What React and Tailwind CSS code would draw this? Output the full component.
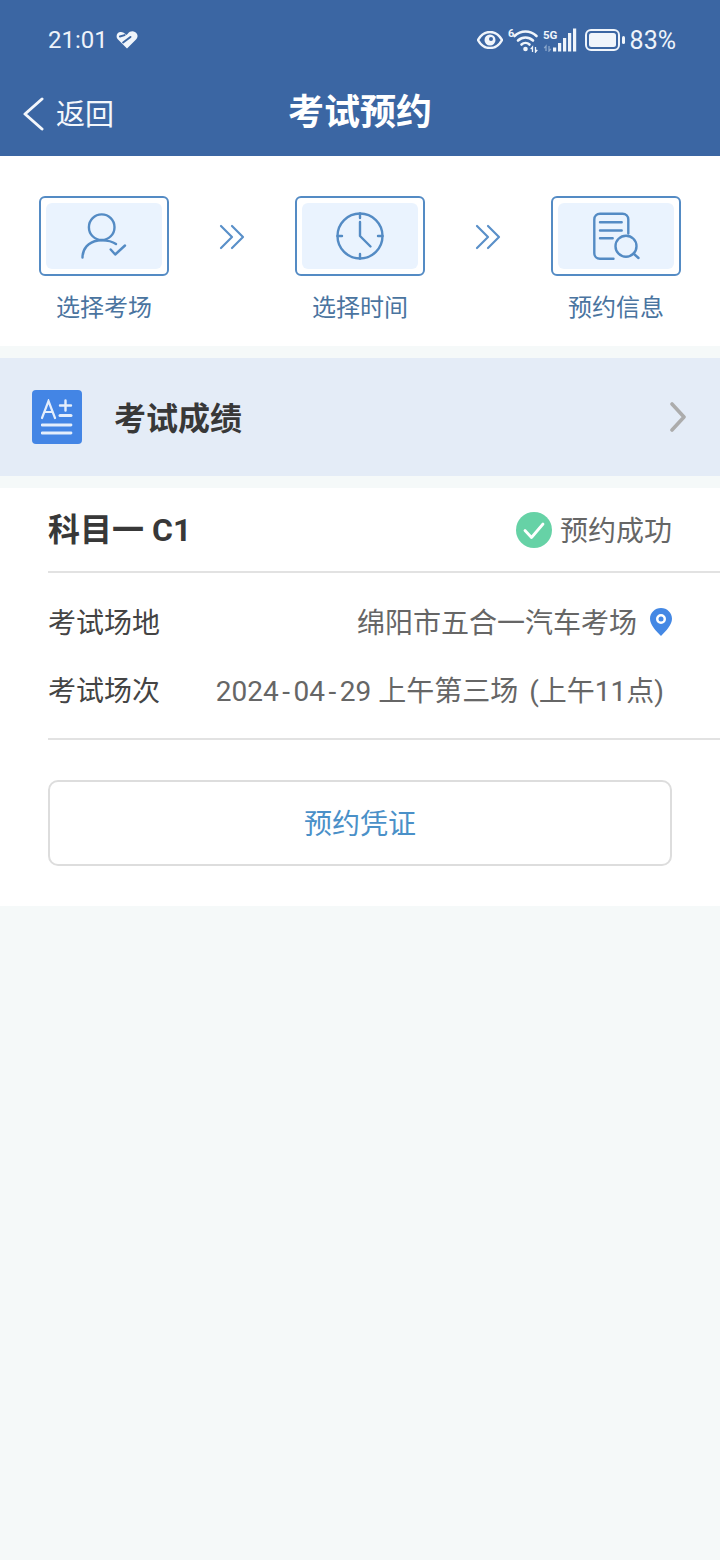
const sans = "font-['Roboto','Noto_Sans_CJK_SC',sans-serif]";

function StatusIcons() {
  return (
    <div className="flex items-center">
      {/* eye */}
      <svg width="26" height="18" viewBox="0 0 26 18" className="mr-[5px]">
        <path d="M1 9C4 3.500 8 1 13 1s9 2.500 12 8c-3 5.500-7 8-12 8S4 14.500 1 9z" fill="none" stroke="#f0f5fb" strokeWidth="2.400" />
        <circle cx="13" cy="9" r="5.500" fill="#f0f5fb" />
        <circle cx="14" cy="8" r="2" fill="#3b66a3" />
      </svg>
      {/* wifi */}
      <svg width="32" height="26" viewBox="0 0 32 26" className="mr-[3px]">
        <text x="0" y="10" fontSize="11" fontWeight="700" fill="#f0f5fb" fontFamily="Roboto, sans-serif">6</text>
        <path d="M6.500 9C13 3 22 3 28.500 9" fill="none" stroke="#f0f5fb" strokeWidth="2.600" strokeLinecap="round" />
        <path d="M10 13.500C14.500 9.500 20.500 9.500 25 13.500" fill="none" stroke="#f0f5fb" strokeWidth="2.600" strokeLinecap="round" />
        <path d="M13.500 17.500C15.800 15.500 19.200 15.500 21.500 17.500" fill="none" stroke="#f0f5fb" strokeWidth="2.600" strokeLinecap="round" />
        <circle cx="17.500" cy="22" r="2.300" fill="#f0f5fb" />
        <path d="M24.500 25v-5l-1.800 2.200M27.500 20v5l1.800-2.200" fill="none" stroke="#f0f5fb" strokeWidth="1.300" />
      </svg>
      {/* 5G signal */}
      <svg width="34" height="24" viewBox="0 0 34 24" className="mr-[8px]">
        <text x="0" y="11" fontSize="11.500" fontWeight="700" fill="#f0f5fb" fontFamily="Roboto, sans-serif">5G</text>
        <path d="M3 23v-5l-1.800 2.200M6 18v5l1.800-2.200" fill="none" stroke="#8aa6cb" strokeWidth="1.300" />
        <rect x="10" y="19.500" width="3.200" height="4" fill="#f0f5fb" />
        <rect x="15" y="15" width="3.200" height="8.500" fill="#f0f5fb" />
        <rect x="20" y="10" width="3.200" height="13.500" fill="#f0f5fb" />
        <rect x="25" y="5" width="3.200" height="18.500" fill="#f0f5fb" />
        <rect x="30" y="0.500" width="3.200" height="23" fill="#f0f5fb" />
      </svg>
      {/* battery */}
      <svg width="40" height="22" viewBox="0 0 40 22" className="mr-[5px]">
        <rect x="1" y="1" width="33" height="20" rx="5" fill="none" stroke="#f0f5fb" strokeWidth="2" />
        <rect x="4" y="4" width="27" height="14" rx="2.500" fill="#f0f5fb" />
        <rect x="37" y="7" width="3" height="8" rx="1.500" fill="#f0f5fb" />
      </svg>
      <span className="text-[25px] leading-none text-[#eef3fa]">83%</span>
    </div>
  );
}

function Step({ label, children }) {
  return (
    <div className="w-[130px] flex flex-col items-center">
      <div className="w-[130px] h-[80px] rounded-[6px] border-2 border-[#548bc4] p-[5px] bg-white">
        <div className="w-full h-full rounded-[6px] bg-[#eaf3fe] flex items-center justify-center">{children}</div>
      </div>
      <div className="mt-[17px] text-[24px] leading-[30px] text-[#4a749f]">{label}</div>
    </div>
  );
}

function DoubleArrow() {
  return (
    <svg width="26" height="26" viewBox="0 0 26 26" className="mt-[28px]">
      <path d="M2 2l11 11L2 24M13 2l11 11-11 11" fill="none" stroke="#5a90c9" strokeWidth="2.200" strokeLinecap="round" strokeLinejoin="round" />
    </svg>
  );
}

function InfoRow({ label, children }) {
  return (
    <div className="h-[68px] flex items-center justify-between">
      <span className="pt-[4px] text-[28px] text-[#444444]">{label}</span>
      {children}
    </div>
  );
}

export default function App() {
  return (
    <div className={`w-[720px] min-h-[1560px] bg-[#f5f9f9] ${sans}`}>
      <header className="h-[156px] bg-[#3b66a3] text-white">
        <div className="h-[80px] pl-[48px] pr-[44px] flex items-center justify-between">
          <div className="flex items-center gap-[8px]">
            <span className="text-[24px] leading-none text-[#eef3fa]">21:01</span>
            <svg width="22" height="18" viewBox="0 0 22 18">
              <path d="M11 17.500L2 8.500C-0.500 6 .500 1.500 4 1c2.500-.300 3.500.500 5 1.800L10.500 4l1.500-1.500C14-.500 19-.500 21 3c1 2 .500 4-1 5.500z" fill="#f0f5fb" />
              <path d="M3.500 6.500L8 4.500M7.500 12L14 5.500" fill="none" stroke="#3b66a3" strokeWidth="2" strokeLinecap="round" transform="rotate(8 11 9)" />
            </svg>
          </div>
          <StatusIcons />
        </div>
        <div className="relative h-[76px] pb-[10px] flex items-center justify-center">
          <div className="absolute left-[22px] top-[12px] flex items-center gap-[11px]">
            <svg width="23" height="34" viewBox="0 0 23 34">
              <path d="M20 2L3 17l17 15" fill="none" stroke="#f4f7fb" strokeWidth="3" strokeLinecap="round" strokeLinejoin="round" />
            </svg>
            <span className="pt-[3px] text-[29px] leading-[40px] text-[#f4f7fb]">返回</span>
          </div>
          <h1 className="text-[36px] font-bold leading-none">考试预约</h1>
        </div>
      </header>

      <section className="h-[190px] bg-white pt-[40px] px-[39px] flex justify-between items-start">
        <Step label="选择考场">
          <svg width="60" height="50" viewBox="0 0 60 50" fill="none" stroke="#548bc4" strokeWidth="2.400" strokeLinecap="round" strokeLinejoin="round">
            <circle cx="27.700" cy="16.200" r="12.800" />
            <path d="M8.500 46.500C8.500 38 14 31 24 29.500c7-.500 13 0 18 3.500" />
            <path d="M36.700 38.500l4.500 5L51 34.500" />
          </svg>
        </Step>
        <DoubleArrow />
        <Step label="选择时间">
          <svg width="50" height="50" viewBox="0 0 50 50" fill="none" stroke="#548bc4" strokeWidth="2.400" strokeLinecap="round" strokeLinejoin="round">
            <circle cx="25" cy="25" r="22.500" />
            <path d="M25 2.500v4.500M25 43v4.500M2.500 25H7M43 25h4.500" />
            <path d="M25 11v14l10.500 10.500" />
          </svg>
        </Step>
        <DoubleArrow />
        <Step label="预约信息">
          <svg width="50" height="50" viewBox="0 0 50 50" fill="none" stroke="#548bc4" strokeWidth="2.400" strokeLinecap="round" strokeLinejoin="round">
            <path d="M22.500 47.800H9c-3.300 0-5.700-2.400-5.700-5.700V8.500c0-3.300 2.400-5.700 5.700-5.700h22.500c3.300 0 5.800 2.400 5.800 5.700V22.500" />
            <path d="M9 11.200h21.700M9 19.500h21.700M9 27.200h12.700" />
            <circle cx="35" cy="35.200" r="10.500" />
            <path d="M42.500 42.500l5 4.500" />
          </svg>
        </Step>
      </section>

      <section className="mt-[12px] h-[118px] bg-[#e4ecf7] pl-[32px] pr-[33px] flex items-center">
        <div className="w-[50px] h-[54px] rounded-[4px] bg-[#4385e5] flex items-center justify-center">
          <svg width="32" height="36" viewBox="0 0 32 36" fill="none" stroke="#e4eefc" strokeWidth="2.200" strokeLinecap="round">
            <path d="M1 19L7.500 2 14 19M3.500 13h8" />
            <path d="M19 6.500h11M24.500 1.500v10" strokeWidth="2.400" />
            <path d="M19 16.500h11" strokeWidth="3" />
            <path d="M1 26h29M1 34h29" strokeWidth="2.800" />
          </svg>
        </div>
        <span className="ml-[32px] pt-[3px] text-[32px] font-bold text-[#383838] leading-none">考试成绩</span>
        <svg width="18" height="30" viewBox="0 0 18 30" className="ml-auto">
          <path d="M3 2l12 13L3 28" fill="none" stroke="#acacac" strokeWidth="3.600" strokeLinecap="round" strokeLinejoin="round" />
        </svg>
      </section>

      <section className="mt-[12px] h-[418px] bg-white pl-[48px]">
        <div className="h-[85px] pr-[48px] border-b-2 border-[#e2e2e2] flex items-center justify-between">
          <span className="text-[32px] font-bold text-[#383838] leading-none">科目一 C1</span>
          <div className="flex items-center gap-[8px]">
            <svg width="36" height="36" viewBox="0 0 36 36">
              <circle cx="18" cy="18" r="18" fill="#66d2a6" />
              <path d="M9 18.500l6.500 7L27 12" fill="none" stroke="#fff" strokeWidth="2.800" strokeLinecap="round" strokeLinejoin="round" />
            </svg>
            <span className="pt-[4px] text-[28px] text-[#666666]">预约成功</span>
          </div>
        </div>
        <div className="pt-[15px] pb-[14px] pr-[48px] border-b-2 border-[#e2e2e2]">
          <InfoRow label="考试场地">
            <div className="flex items-center gap-[13px]">
              <span className="pt-[4px] text-[28px] text-[#666666]">绵阳市五合一汽车考场</span>
              <svg width="22" height="28" viewBox="0 0 22 28">
                <path fillRule="evenodd" d="M11 0C4.900 0 0 4.800 0 10.800 0 17 6 23 11 28c5-5 11-11 11-17.200C22 4.800 17.100 0 11 0zm0 6a5 5 0 110 10 5 5 0 010-10z" fill="#4488e4" />
                <circle cx="11" cy="11" r="2.500" fill="#4488e4" />
              </svg>
            </div>
          </InfoRow>
          <InfoRow label="考试场次">
            <span className="pt-[4px] text-[28px] text-[#666666] pr-[8px] whitespace-pre">
              2024<span className="px-[3.500px]">-</span>04<span className="px-[3.500px]">-</span>29 上午第三场 <span className="ml-[4px]">(</span>上午11点)
            </span>
          </InfoRow>
        </div>
        <div className="pr-[48px] pt-[40px]">
          <button className="w-full h-[86px] pt-[4px] rounded-[10px] border-2 border-[#dddddd] bg-white text-[28px] text-[#4a90c8]">预约凭证</button>
        </div>
      </section>
    </div>
  );
}
